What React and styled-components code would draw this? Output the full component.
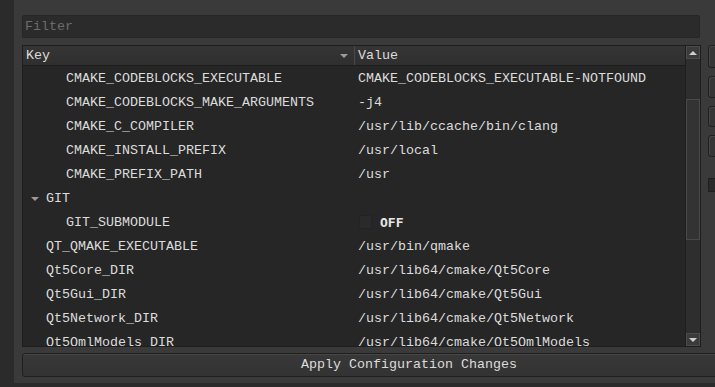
import React from 'react'
import styled, { createGlobalStyle } from 'styled-components'

const Global = createGlobalStyle`
  html, body {
    margin: 0;
    padding: 0;
    background: #2b2b2b;
    overflow: hidden;
  }
  * { box-sizing: border-box; }
`

const Page = styled.div`
  width: 715px;
  height: 387px;
  display: flex;
  overflow: hidden;
  font-family: "Liberation Mono", "DejaVu Sans Mono", monospace;
  font-size: 13.33px;
  color: #dcdcdc;
`

const Edge = styled.div`
  width: 14px;
  flex-shrink: 0;
  background: #2b2b2b;
`

const Panel = styled.div`
  width: 800px;
  height: 383px;
  flex-shrink: 0;
  background: #3a3a3a;
  padding: 15px 0 0 8px;
  display: flex;
  flex-direction: column;
`

const Filter = styled.div`
  width: 678px;
  height: 23px;
  background: #2b2b2b;
  border: 1px solid #262626;
  border-radius: 2px;
  color: #6c6c6c;
  padding: 0 0 0 2px;
  line-height: 21px;
`

const Middle = styled.div`
  display: flex;
  gap: 7px;
  margin-top: 7px;
`

const Table = styled.div`
  width: 679px;
  height: 302px;
  border: 1px solid #1e1e1e;
  background: #262626;
  display: flex;
`

const Main = styled.div`
  flex: 1;
  display: flex;
  flex-direction: column;
  overflow: hidden;
`

const Header = styled.div`
  height: 20px;
  flex-shrink: 0;
  display: flex;
  background: linear-gradient(#353535, #2f2f2f);
  border-bottom: 1px solid #1c1c1c;
  line-height: 19px;
`

const HeadCell = styled.div`
  width: ${p => p.$w || 'auto'};
  flex: ${p => (p.$w ? 'none' : 1)};
  padding-left: 3px;
  display: flex;
  align-items: center;
  justify-content: space-between;
  border-right: ${p => (p.$w ? '1px solid #4a4a4a' : 'none')};
`

const SortArrow = styled.span`
  width: 0;
  height: 0;
  margin-right: 6px;
  border-left: 4px solid transparent;
  border-right: 4px solid transparent;
  border-top: 4px solid #9a9a9a;
`

const Body = styled.div`
  flex: 1;
  overflow: hidden;
`

const Row = styled.div`
  height: 24px;
  display: flex;
  align-items: center;
  white-space: nowrap;
`

const KeyCell = styled.div`
  width: 332px;
  flex-shrink: 0;
  padding-left: ${p => 23 + p.$level * 20}px;
  display: flex;
  align-items: center;
  position: relative;
`

const Expander = styled.span`
  position: absolute;
  left: 8px;
  top: 6px;
  width: 0;
  height: 0;
  border-left: 4px solid transparent;
  border-right: 4px solid transparent;
  border-top: 4px solid #9a9a9a;
`

const ValueCell = styled.div`
  flex: 1;
  padding-left: 3px;
  display: flex;
  align-items: center;
  gap: 8px;
`

const Check = styled.span`
  width: 13px;
  height: 14px;
  margin-left: 1px;
  background: #2a2a2a;
  border: 1px solid #232323;
`

const Bold = styled.span`
  font-family: "DejaVu Sans Mono", monospace;
  font-weight: bold;
  font-size: 13px;
  color: #e6e6e6;
`

const Scroll = styled.div`
  width: 15px;
  flex-shrink: 0;
  display: flex;
  flex-direction: column;
  background: #2e2e2e;
  border-left: 1px solid #1e1e1e;
`

const ScrollBtn = styled.div`
  height: 13px;
  flex-shrink: 0;
  background: #3b3b3b;
  border: 1px solid #4c4c4c;
  display: flex;
  align-items: center;
  justify-content: center;
  &::after {
    content: '';
    border-left: 4px solid transparent;
    border-right: 4px solid transparent;
    ${p => (p.$down ? 'border-top: 4px solid #d0d0d0;' : 'border-bottom: 4px solid #d0d0d0;')}
  }
`

const Track = styled.div`
  flex: 1;
  padding: 40px 0 93px;
  display: flex;
`

const Thumb = styled.div`
  flex: 1;
  background: #333333;
  border: 1px solid #4a4a4a;
`

const Side = styled.div`
  display: flex;
  flex-direction: column;
  gap: 8px;
`

const SideBtn = styled.div`
  width: 88px;
  height: ${p => p.$h}px;
  background: #363636;
  border: 1px solid #1f1f1f;
  border-radius: 3px;
  box-shadow: inset 1px 1px 0 #474747;
`

const SideBox = styled.div`
  width: 12px;
  height: 14px;
  margin-top: 13px;
  background: #2a2a2a;
  border: 1px solid #1f1f1f;
`

const Apply = styled.div`
  width: 774px;
  height: 24px;
  margin-top: 6px;
  background: linear-gradient(#383838, #333333);
  border: 1px solid #1f1f1f;
  border-radius: 3px;
  box-shadow: inset 0 1px 0 #464646;
  text-align: center;
  line-height: 22px;
`

const rows = [
  { key: 'CMAKE_CODEBLOCKS_EXECUTABLE', value: 'CMAKE_CODEBLOCKS_EXECUTABLE-NOTFOUND', level: 2 },
  { key: 'CMAKE_CODEBLOCKS_MAKE_ARGUMENTS', value: '-j4', level: 2 },
  { key: 'CMAKE_C_COMPILER', value: '/usr/lib/ccache/bin/clang', level: 2 },
  { key: 'CMAKE_INSTALL_PREFIX', value: '/usr/local', level: 2 },
  { key: 'CMAKE_PREFIX_PATH', value: '/usr', level: 2 },
  { key: 'GIT', level: 1, group: true },
  { key: 'GIT_SUBMODULE', level: 2, bool: 'OFF' },
  { key: 'QT_QMAKE_EXECUTABLE', value: '/usr/bin/qmake', level: 1 },
  { key: 'Qt5Core_DIR', value: '/usr/lib64/cmake/Qt5Core', level: 1 },
  { key: 'Qt5Gui_DIR', value: '/usr/lib64/cmake/Qt5Gui', level: 1 },
  { key: 'Qt5Network_DIR', value: '/usr/lib64/cmake/Qt5Network', level: 1 },
  { key: 'Qt5QmlModels_DIR', value: '/usr/lib64/cmake/Qt5QmlModels', level: 1 },
]

const App = () => {
  return (
    <Page>
      <Global />
      <Edge />
      <Panel>
        <Filter>Filter</Filter>
        <Middle>
          <Table>
            <Main>
              <Header>
                <HeadCell $w="332px">
                  Key
                  <SortArrow />
                </HeadCell>
                <HeadCell>Value</HeadCell>
              </Header>
              <Body>
                {rows.map(r => (
                  <Row key={r.key}>
                    <KeyCell $level={r.level - 1}>
                      {r.group && <Expander />}
                      {r.key}
                    </KeyCell>
                    <ValueCell>
                      {r.bool ? (
                        <>
                          <Check />
                          <Bold>{r.bool}</Bold>
                        </>
                      ) : (
                        r.value
                      )}
                    </ValueCell>
                  </Row>
                ))}
              </Body>
            </Main>
            <Scroll>
              <ScrollBtn />
              <Track>
                <Thumb />
              </Track>
              <ScrollBtn $down />
            </Scroll>
          </Table>
          <Side>
            <SideBtn $h={23} />
            <SideBtn $h={22} />
            <SideBtn $h={21} />
            <SideBtn $h={22} />
            <SideBox />
          </Side>
        </Middle>
        <Apply>Apply Configuration Changes</Apply>
      </Panel>
    </Page>
  )
}

export default App
